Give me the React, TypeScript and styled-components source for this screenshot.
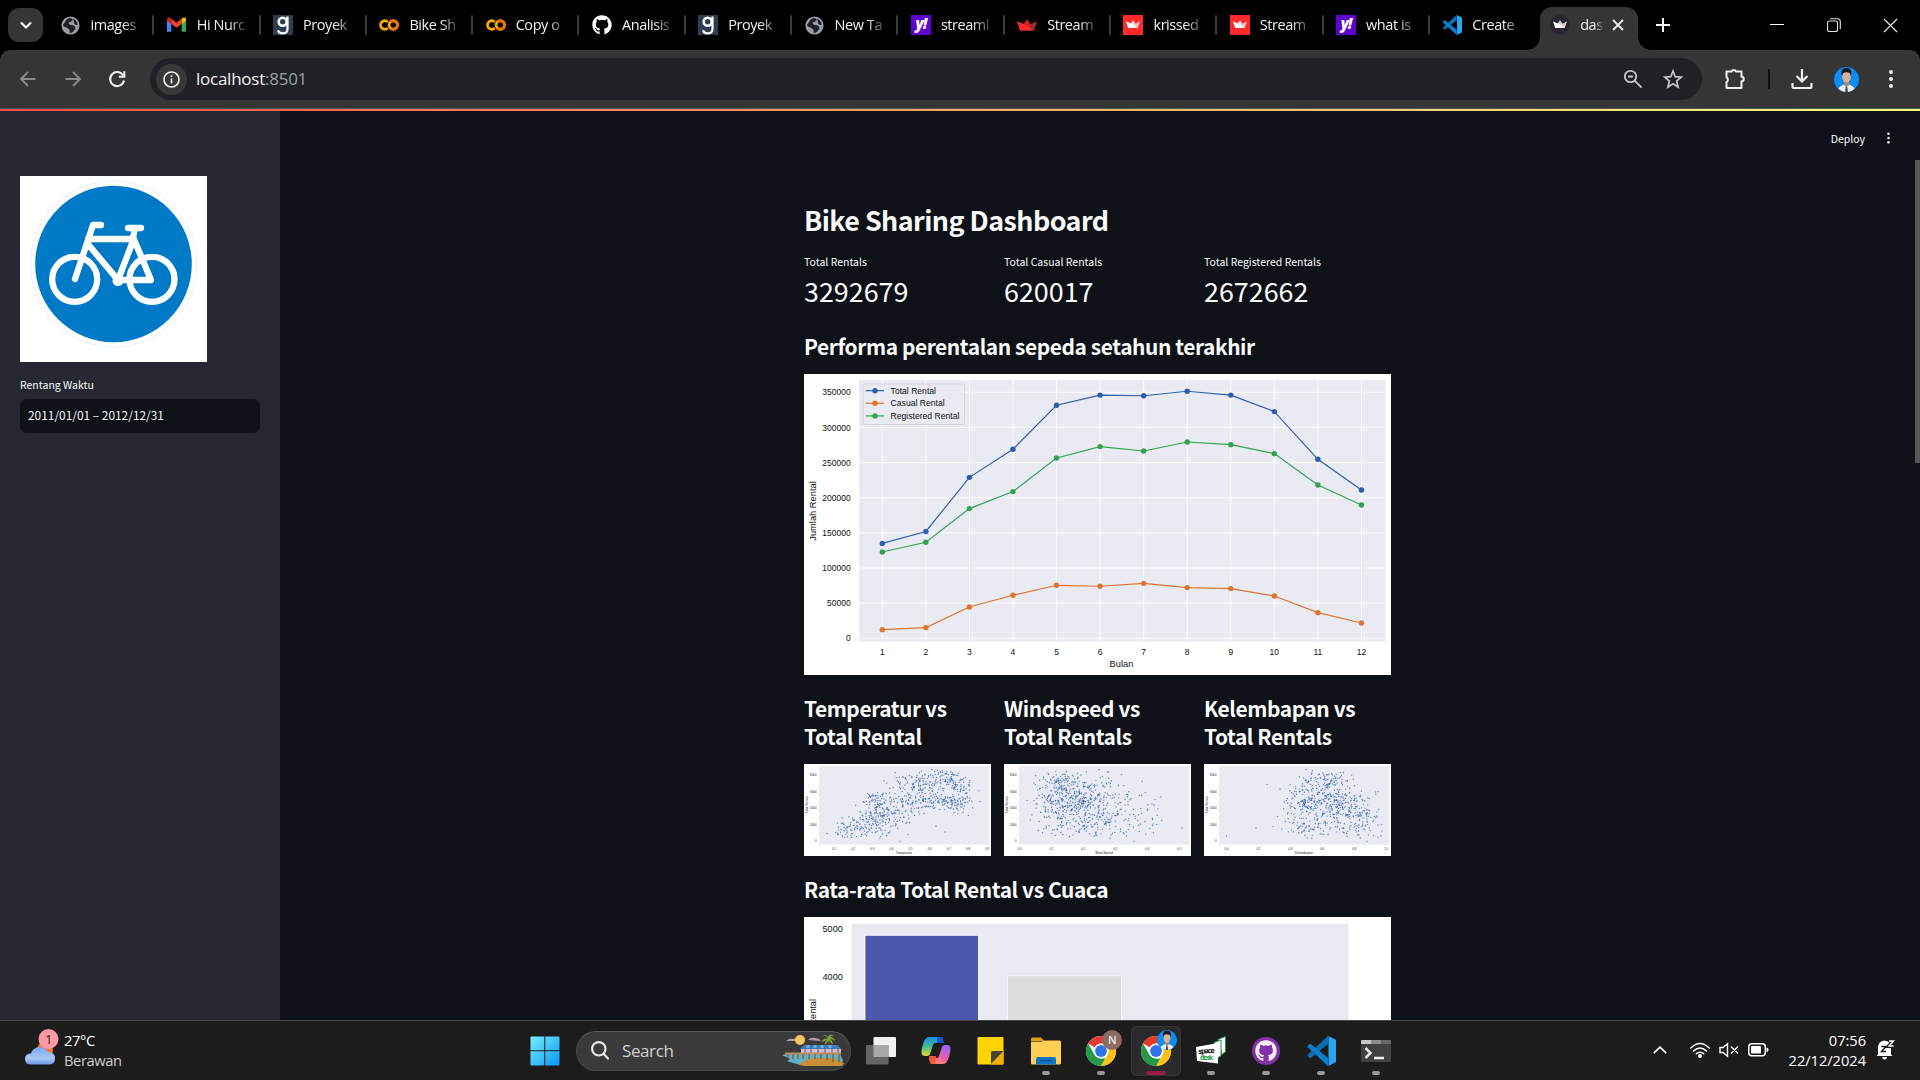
import React from "react";
import styled, { createGlobalStyle } from "styled-components";
import { FaGithub } from "react-icons/fa";

const ui = `"Open Sans", "Noto Sans", sans-serif`;
const source = `"Noto Sans CJK SC", "Noto Sans", sans-serif`;

const GlobalStyle = createGlobalStyle`
  * { box-sizing: border-box; }
  body { margin: 0; background: #0e1117; overflow: hidden; }
  h1, h2, h3, p { margin: 0; }
  svg { display: block; flex: none; overflow: visible; }
`;

const Screen = styled.div`
  width: 1920px;
  height: 1080px;
  display: flex;
  flex-direction: column;
  overflow: hidden;
  background: #000;
  font-family: ${ui};
`;

/* ---------- browser tabs ---------- */

const TabStrip = styled.div`
  height: 50px;
  flex: none;
  display: flex;
  align-items: flex-start;
  padding-left: 8px;
  color: #f0f0f0;
`;

const TabSearch = styled.div`
  width: 35px;
  height: 34px;
  margin: 8px 5px 0 0;
  border-radius: 11px;
  background: #353535;
  display: grid;
  place-items: center;
`;

const Tab = styled.div`
  width: 106.3px;
  height: 50px;
  flex: none;
  display: flex;
  align-items: center;
  padding-left: 12.5px;
`;

const Favicon = styled.div`
  width: 20px;
  height: 20px;
  flex: none;
  display: grid;
  place-items: center;
`;

const TabTitle = styled.span<{ $width: number }>`
  width: ${(p) => p.$width}px;
  margin-left: 10px;
  white-space: nowrap;
  font-size: 14.5px;
  line-height: 22px;
  letter-spacing: -0.45px;
  mask-image: linear-gradient(90deg, #000 62%, rgba(0, 0, 0, 0.15) 100%);
`;

const TabDivider = styled.i`
  width: 2px;
  height: 20px;
  margin-left: auto;
  border-radius: 1px;
  background: #3b3b3b;
`;

const ActiveTab = styled.div`
  width: 98px;
  height: 43px;
  margin: 7px 0 0 4px;
  flex: none;
  display: flex;
  align-items: center;
  padding: 0 14px 7px 10px;
  border-radius: 12px 12px 0 0;
  background: #353535;
  position: relative;
  &::before,
  &::after {
    content: "";
    position: absolute;
    bottom: 0;
    width: 13px;
    height: 13px;
  }
  &::before {
    right: 100%;
    background: radial-gradient(circle at 0 0, transparent 12.5px, #353535 13px);
  }
  &::after {
    left: 100%;
    background: radial-gradient(circle at 100% 0, transparent 12.5px, #353535 13px);
  }
`;

const CloseTab = styled.div`
  margin-left: auto;
`;

const NewTab = styled.div`
  width: 50px;
  height: 50px;
  display: grid;
  place-items: center;
`;

const WindowControls = styled.div`
  margin-left: auto;
  padding-right: 1px;
  display: flex;
  div {
    width: 57px;
    height: 50px;
    display: grid;
    place-items: center;
  }
`;

/* ---------- browser toolbar ---------- */

const Toolbar = styled.div`
  height: 58px;
  flex: none;
  display: flex;
  align-items: center;
  padding: 0 17px 0 17px;
  border-radius: 10px 10px 0 0;
  background: #353535;
`;

const NavButtons = styled.div`
  display: flex;
  width: 133px;
  gap: 22.7px;
`;

const Omnibox = styled.div`
  width: 1552px;
  height: 42px;
  border-radius: 21px;
  background: #202124;
  display: flex;
  align-items: center;
  padding: 0 17px 0 6px;
`;

const SiteInfo = styled.div`
  width: 31px;
  height: 31px;
  border-radius: 50%;
  background: #383838;
  display: grid;
  place-items: center;
`;

const Url = styled.span`
  flex: 1;
  margin-left: 9px;
  color: #f2f2f2;
  font-size: 17px;
  letter-spacing: -0.25px;
  line-height: 24px;
  span {
    color: #9aa0a6;
  }
`;

const OmniIcons = styled.div`
  display: flex;
  gap: 16px;
`;

const ToolbarIcons = styled.div`
  flex: 1;
  display: flex;
  align-items: center;
  gap: 21px;
  padding-left: 21px;
`;

const ToolbarDivider = styled.i`
  width: 2px;
  height: 20px;
  background: #111;
`;

/* ---------- streamlit page ---------- */

const Decoration = styled.div`
  height: 3px;
  flex: none;
  border-top: 1px solid #45595a;
  background: linear-gradient(90deg, #ff4b4b, #fffd80);
`;

const Page = styled.div`
  height: 909px;
  flex: none;
  display: flex;
  background: #0e1117;
  color: #fafafa;
  font-family: ${source};
  overflow: hidden;
`;

const Sidebar = styled.aside`
  width: 280px;
  flex: none;
  padding: 65px 20px 0;
  background: #262730;
`;

const FieldLabel = styled.div`
  margin-top: 13px;
  font-size: 10.5px;
  line-height: 20px;
`;

const DateInput = styled.div`
  height: 34px;
  margin-top: 4px;
  padding-left: 8px;
  border-radius: 7px;
  background: #0e1117;
  font-size: 11.9px;
  line-height: 31px;
`;

const Main = styled.main`
  flex: 1;
  min-width: 0;
  display: flex;
  flex-direction: column;
  align-items: center;
`;

const AppHeader = styled.header`
  width: 100%;
  height: 49px;
  flex: none;
  display: flex;
  justify-content: flex-end;
  align-items: center;
  gap: 21px;
  padding: 5px 29px 0 0;
  font-size: 10.5px;
`;

const Body = styled.div`
  width: 100%;
  flex: 1;
  min-height: 0;
  display: flex;
`;

const Scroll = styled.div`
  width: 5px;
  flex: none;
  i {
    display: block;
    height: 303px;
    background: #55575b;
  }
`;

const Content = styled.div`
  width: 587px;
  flex: none;
  margin: 42px auto 0 524px;
`;

const Title = styled.h1`
  font-size: 26.9px;
  line-height: 36px;
  font-weight: 600;
  letter-spacing: -0.56px;
  white-space: nowrap;
`;

const Columns = styled.div<{ $top: number }>`
  display: grid;
  grid-template-columns: repeat(3, 187px);
  gap: 13px;
  margin-top: ${(p) => p.$top}px;
`;

const MetricLabel = styled.div`
  font-size: 10.5px;
  line-height: 20px;
  white-space: nowrap;
`;

const MetricValue = styled.div`
  font-size: 26.9px;
  line-height: 38px;
`;

const Heading = styled.h3<{ $top: number }>`
  margin: ${(p) => p.$top}px 0 14px;
  font-size: 20.9px;
  line-height: 28px;
  font-weight: 600;
  letter-spacing: -0.41px;
`;

const Figure = styled.div<{ $height: number }>`
  height: ${(p) => p.$height}px;
  background: #fff;
  svg {
    font-family: "Liberation Sans", Arial, sans-serif;
  }
`;

/* ---------- taskbar ---------- */

const Taskbar = styled.footer`
  height: 60px;
  flex: none;
  display: grid;
  grid-template-columns: 519.5px 1fr auto;
  border-top: 1px solid #474747;
  background: #1c1c1c;
  color: #fff;
  font-size: 14.7px;
  letter-spacing: -0.4px;
  line-height: 20px;
`;

const Weather = styled.div`
  display: flex;
  align-items: center;
  gap: 8px;
  padding: 0 0 2px 24px;
  div {
    color: #cfcfcf;
  }
  div b {
    display: block;
    font-weight: 400;
    color: #fff;
  }
`;

const Apps = styled.div`
  display: flex;
  align-items: center;
  gap: 5px;
`;

const AppButton = styled.div<{ $active?: boolean }>`
  width: 50px;
  height: 50px;
  flex: none;
  display: flex;
  flex-direction: column;
  align-items: center;
  padding-top: 10px;
  border-radius: 6px;
  box-shadow: ${(p) => (p.$active ? "inset 0 0 0 1px #353535" : "none")};
  background: ${(p) => (p.$active ? "#2b2b2b" : "transparent")};
`;

const Running = styled.i<{ $active?: boolean }>`
  width: ${(p) => (p.$active ? 20 : 8)}px;
  height: 4px;
  margin-top: 5px;
  border-radius: 2px;
  background: ${(p) => (p.$active ? "#991b43" : "#989898")};
`;

const SearchBox = styled.div`
  width: 275px;
  height: 40px;
  margin: 0 0 0 1.5px;
  flex: none;
  display: flex;
  align-items: center;
  padding: 0 6px 0 14px;
  border: 1px solid #4a4a4a;
  border-top-color: #5a5a5a;
  border-radius: 20px;
  background: #3a3a3a;
  color: #d0d0d0;
  font-size: 17px;
  letter-spacing: -0.4px;
  span {
    flex: 1;
    margin-left: 13px;
  }
`;

const Tray = styled.div`
  display: flex;
  align-items: center;
  padding: 0 25px 2px 0;
`;

const TrayIcons = styled.div`
  display: flex;
  align-items: center;
  gap: 9px;
  margin-right: 20px;
`;

const Clock = styled.div`
  margin-right: 10px;
  text-align: right;
  letter-spacing: -0.05px;
`;

/* ---------- icons ---------- */

const Globe = () => (
  <svg width="19" height="19" viewBox="0 0 20 20">
    <circle cx="10" cy="10" r="9.5" fill="#9aa0a6" />
    <path d="M4 6.5C6 3 9 1.500 11 2.500c2.500 1 1 3-1 3.500-2 .5-2.500 2-1 3 2 1 5 .5 6 2.500 1 2-2 5-4.500 6.500-2 .5-1-2.500-2-4C7 12 3 12 2 9.500zM13 3c3 1 4.500 4 4.500 6.500-1.500 0-4-1-4-3z" fill="#202124" />
  </svg>
);

const Gmail = () => (
  <svg width="19" height="16" viewBox="0 0 20 16">
    <path d="M0 2v13h4.500V5z" fill="#4285f4" />
    <path d="M15.500 5v10H20V2z" fill="#34a853" />
    <path d="M15.500 1.200V7L20 3.500V2c0-2-2.500-2.500-4.500-.8" fill="#fbbc04" />
    <path d="M4.500 1.200 10 5.500l5.500-4.300V7L10 11 4.500 7z" fill="#ea4335" />
    <path d="M4.500 1.200C2.500-.5 0 0 0 2v1.500L4.500 7z" fill="#c5221f" />
  </svg>
);

const GLetter = () => (
  <svg width="20" height="20" viewBox="0 0 20 20">
    <rect width="20" height="20" fill="#2d3e50" />
    <circle cx="9.700" cy="6.800" r="4" fill="none" stroke="#fff" strokeWidth="2.600" />
    <path d="M14.500 1.500v12.500c0 3-2 4.300-4.700 4.300-2.600 0-4.300-1-4.700-3" fill="none" stroke="#fff" strokeWidth="2.200" />
  </svg>
);

const Colab = () => (
  <svg width="20" height="12" viewBox="0 0 20 12">
    <circle cx="14.300" cy="6" r="4.200" fill="none" stroke="#f9ab00" strokeWidth="2.900" />
    <path d="M11.300 3a4.200 4.200 0 1 1 0 6" fill="none" stroke="#e8710a" strokeWidth="2.900" />
    <path d="M8.700 3A4.200 4.200 0 1 0 8.700 9" fill="none" stroke="#f9ab00" strokeWidth="2.900" />
  </svg>
);

const YahooBox = styled.b`
  width: 20px;
  height: 20px;
  background: #5f01d1;
  color: #fff;
  text-align: center;
  font: italic 800 15px/17px ${ui};
  letter-spacing: -1px;
`;

const Crown = ({ kind }: { kind: "red" | "box" | "dark" }) => {
  const main = kind === "red" ? "#ff2b2b" : "#fff";
  return (
    <svg width="20" height="20" viewBox="0 0 20 20">
      {kind === "box" && <rect width="20" height="20" fill="#ff2b2b" />}
      {kind === "dark" && <circle cx="10" cy="10" r="10" fill="#262730" />}
      <g transform={kind === "red" ? "translate(-2.500 -2) scale(1.250)" : "translate(1.500 1) scale(.85)"}>
        <path d="M2 6.500 7 9l3-4 3 4 5-2.500-2.500 7.500h-11z" fill={main} opacity=".8" />
        <path d="M2 6.500l10 4.500 3.500 3h-11z" fill={main} />
        <path d="M18 6.500 12 11l2 3h1.500z" fill={kind === "red" ? "#7d353b" : "#f1b9bc"} opacity=".7" />
      </g>
    </svg>
  );
};

const VsCode = ({ size }: { size: number }) => (
  <svg width={size} height={size} viewBox="0 0 30 30">
    <path d="M22 0 2 18.500c-.7.600-.7 1.500 0 2l1.500 1.300c.5.4 1 .4 1.600 0L22 8z" fill="#0a6fb5" />
    <path d="M22 30 2 11.500c-.7-.6-.7-1.500 0-2l1.500-1.300c.5-.4 1-.4 1.600 0L22 22z" fill="#0c80cc" />
    <path d="M21 .5c.4-.5.800-.6 1.500-.3l6 2.800c1 .5 1.500 1 1.500 2v20c0 1-.5 1.500-1.500 2l-6 2.800c-.7.3-1.200.2-1.500-.3 1 .5 1.500 0 1.500-1V1.500c0-1-.5-1.500-1.500-1z" fill="#2aa5ef" />
  </svg>
);

const Arrow = ({ flip }: { flip?: boolean }) => (
  <svg width="22" height="22" viewBox="0 0 22 22" fill="none" stroke="#8b8b8b" strokeWidth="1.800">
    <path transform={flip ? "rotate(180 11 11)" : undefined} d="M18.500 11H4M11 4l-7 7 7 7" />
  </svg>
);

const Reload = () => (
  <svg width="22" height="22" viewBox="0 0 22 22" fill="none" stroke="#eee" strokeWidth="2.100">
    <path d="M17.200 7.500A7 7 0 1 0 18 12.500" />
    <path d="M18.300 3.300v5.400h-5.500" />
  </svg>
);

const Dots = ({ size, color = "#eee" }: { size: number; color?: string }) => (
  <svg width="5" height={size} viewBox={`0 0 5 ${size}`} fill={color}>
    {[0.14, 0.5, 0.86].map((f) => (
      <circle key={f} cx="2.500" cy={size * f} r={size / 9.5} />
    ))}
  </svg>
);

const Person = ({ size }: { size: number }) => (
  <svg width={size} height={size} viewBox="0 0 26 26">
    <clipPath id={`person${size}`}><circle cx="13" cy="13" r="13" /></clipPath>
    <g clipPath={`url(#person${size})`}>
      <rect width="26" height="26" fill="#0c8cf5" />
      <path d="M4 26c0-5 3.500-7 9-8.500 5.500 1.500 9 3.500 9 8.500z" fill="#eceef3" />
      <path d="M10.500 14h5v5L13 21l-2.500-2z" fill="#b9835e" />
      <ellipse cx="13" cy="10" rx="4.500" ry="6.500" fill="#dfae8b" />
      <path d="M8.300 9.500C7 3.500 9 1 13 1s6 2.500 4.700 8.500C17 6.500 16 5.500 13 5.500s-4 1-4.700 4z" fill="#1d1716" />
      <path d="m12.300 20.500 1.500 0 .7 5.500h-3z" fill="#34485f" />
    </g>
  </svg>
);

const ChromeLogo = () => (
  <g>
    <circle cx="15" cy="15" r="15" fill="#fff" />
    <path d="M15 15 2 7.500A15 15 0 0 1 28 7.500H15z" fill="#e33b2e" />
    <path d="M15 7.500H28A15 15 0 0 1 15 30l6.500-11.300z" fill="#fbc116" />
    <path d="M2 7.500 8.500 18.700 15 22.500h4.300L15 30A15 15 0 0 1 2 7.500z" fill="#279847" />
    <circle cx="15" cy="15" r="7.500" fill="#fff" />
    <circle cx="15" cy="15" r="5.900" fill="#2c74e8" />
  </g>
);

/* ---------- sidebar picture ---------- */

const BikeSign = () => (
  <svg width="187" height="186" viewBox="0 0 187 186">
    <rect width="187" height="186" fill="#fff" />
    <circle cx="93.500" cy="88" r="83" fill="#fff" stroke="#e3f1f8" strokeWidth="1" />
    <circle cx="93.500" cy="88" r="78.300" fill="#0079c7" />
    <g fill="none" stroke="#fff" strokeWidth="6.300" strokeLinecap="round" strokeLinejoin="round">
      <circle cx="54.700" cy="103.300" r="22.500" />
      <circle cx="132" cy="103.300" r="22.500" />
      <path d="M55 103 73 49h8M68 63h45M67 67l31 37h33L113 61M113 65 98 104M113 62l2-10M108 52h13" />
    </g>
    <circle cx="98" cy="104.500" r="5.500" fill="#fff" />
  </svg>
);

/* ---------- line chart ---------- */

const series = [
  { name: "Total Rental", color: "#2c5eb0", data: [135, 152, 229, 269, 331.5, 346, 345, 351.5, 346, 322.5, 254.7, 211] },
  { name: "Casual Rental", color: "#dd7630", data: [12.3, 15.2, 44.6, 61.2, 75.4, 74, 78.2, 72.1, 70.7, 60.2, 36.5, 21.8] },
  { name: "Registered Rental", color: "#33a352", data: [122.8, 136.6, 184.5, 208.7, 256.6, 272.7, 266.5, 279.3, 275.5, 262.7, 218.2, 189.7] },
];

const monthX = (i: number) => 78.3 + i * 43.56;
const rentalY = (v: number) => 264.3 - v * 0.7029;

const LineChart = () => (
  <svg width="587" height="301" viewBox="0 0 587 301" fontSize="8.500" fill="#111">
    <rect x="55" y="6" width="526.500" height="261.500" fill="#eaeaf2" />
    {[0, 50, 100, 150, 200, 250, 300, 350].map((v) => (
      <g key={v}>
        <path d={`M55 ${rentalY(v)}h526.500`} stroke="#fff" strokeWidth=".9" />
        <text x="46.700" y={rentalY(v) + 3.1} textAnchor="end">{v * 1000}</text>
      </g>
    ))}
    {series[0].data.map((_, i) => (
      <g key={i}>
        <path d={`M${monthX(i)} 6v261.500`} stroke="#fff" strokeWidth=".9" />
        <text x={monthX(i)} y="281.400" textAnchor="middle">{i + 1}</text>
      </g>
    ))}
    {series.map((s) => (
      <g key={s.name}>
        <polyline points={s.data.map((v, i) => `${monthX(i)},${rentalY(v)}`).join(" ")} fill="none" stroke={s.color} strokeWidth="1.150" />
        {s.data.map((v, i) => (
          <circle key={i} cx={monthX(i)} cy={rentalY(v)} r="2.700" fill={s.color} />
        ))}
      </g>
    ))}
    <rect x="59" y="10" width="101.500" height="40.500" rx="1.500" fill="#eaeaf2" fillOpacity=".85" stroke="#cfcfd6" strokeWidth=".8" />
    {series.map((s, i) => (
      <g key={s.name} transform={`translate(0 ${16.7 + i * 12.6})`}>
        <path d="M61.700 0H80" stroke={s.color} strokeWidth="1.200" />
        <circle cx="71" r="2.700" fill={s.color} />
        <text x="86.600" y="3" fontSize="8.600">{s.name}</text>
      </g>
    ))}
    <text x="317.500" y="293.300" textAnchor="middle" fontSize="9.300">Bulan</text>
    <text transform="translate(12.400 137) rotate(-90)" textAnchor="middle" fontSize="9.300">Jumlah Rental</text>
  </svg>
);

/* ---------- scatter charts ---------- */

type Cluster = [cx: number, cy: number, sx: number, sy: number, count: number, slope?: number];

function scatterPoints(clusters: Cluster[], seed: number) {
  let s = seed;
  const rnd = () => {
    s = (s * 16807) % 2147483647;
    return s / 2147483647;
  };
  const gauss = () => {
    let g = 3;
    while (Math.abs(g) > 2) g = Math.sqrt(-2 * Math.log(rnd())) * Math.cos(6.28318 * rnd());
    return g;
  };
  const out: [number, number][] = [];
  clusters.forEach(([cx, cy, sx, sy, count, slope = 0]) => {
    for (let i = 0; i < count; i++) {
      const gx = gauss();
      const gy = gauss();
      const x = cx + gx * sx;
      const y = cy + gy * sy + slope * gx * sx;
      if (y > 6 && y < 75 && x > 20 && x < 181) out.push([x, y]);
    }
  });
  return out;
}

const scatters = [
  {
    title: "Temperatur vs Total Rental",
    axis: "Temperatur",
    ticks: [0.1, 0.2, 0.3, 0.4, 0.5, 0.6, 0.7, 0.8, 0.9],
    first: 30, step: 19.15, seed: 77,
    clusters: [[60, 61, 17, 6, 125, -0.15], [72, 45, 11, 7, 90, -0.2], [70, 32, 6, 2, 20], [102, 42, 16, 9, 115, -0.25], [143, 38, 13, 4, 105], [122, 16, 16, 6, 100, -0.1], [151, 19, 8, 6, 55, 0.3], [118, 28, 20, 9, 75, -0.1], [158, 32, 9, 10, 32], [80, 67, 15, 4, 22]] as Cluster[],
    extra: [[96, 77.5], [141, 68], [23, 69.5], [176, 37.5], [132, 62], [128, 5.5]],
  },
  {
    title: "Windspeed vs Total Rentals",
    axis: "Wind Speed",
    ticks: ["0.0", 0.1, 0.2, 0.3, 0.4, 0.5],
    first: 15.5, step: 31.9, seed: 1234,
    clusters: [[68, 38, 19, 6, 165], [56, 17, 14, 5, 75], [67, 26, 18, 6, 70], [85, 60, 18, 8, 100], [97, 28, 23, 12, 105], [125, 50, 18, 13, 65], [48, 48, 12, 12, 45], [78, 48, 18, 9, 60]] as Cluster[],
    extra: [[130, 77.5], [157, 33], [178, 64], [148, 40], [23, 36.5], [95, 5.5], [149, 60]],
  },
  {
    title: "Kelembapan vs Total Rentals",
    axis: "Kelembapan",
    ticks: ["0.0", 0.2, 0.4, 0.6, 0.8, "1.0"],
    first: 22.5, step: 31.9, seed: 909,
    clusters: [[130, 40, 18, 7, 130], [119, 16, 15, 5, 85], [103, 36, 11, 8, 65], [103, 62, 11, 7, 65], [140, 46, 19, 13, 130], [153, 59, 13, 8, 65], [122, 27, 18, 8, 60], [92, 42, 13, 12, 30]] as Cluster[],
    extra: [[22.5, 72], [52, 64], [63, 20.5], [163, 77.5], [102, 5.5], [178, 67]],
  },
];

const ScatterChart = ({ data }: { data: (typeof scatters)[number] }) => (
  <svg width="187" height="92" viewBox="0 0 187 92" fontSize="2.900" fill="#222">
    <rect x="15" y="2" width="170" height="78.700" fill="#eaeaf2" />
    {[8000, 6000, 4000, 2000, 0].map((v, i) => (
      <text key={v} x="12.500" y={12.3 + i * 16.5} textAnchor="end">{v}</text>
    ))}
    {data.ticks.map((t, i) => (
      <text key={i} x={data.first + i * data.step} y="85.600" textAnchor="middle">{t}</text>
    ))}
    <g fill="#245cb0" fillOpacity=".75">
      {[...scatterPoints(data.clusters, data.seed), ...data.extra].map(([x, y], i) => (
        <circle key={i} cx={x} cy={y} r=".68" />
      ))}
    </g>
    <text x="100" y="89.800" textAnchor="middle" fontSize="3.200">{data.axis}</text>
    <text transform="translate(4 41) rotate(-90)" textAnchor="middle" fontSize="3.200">Total Rental</text>
  </svg>
);

const BarChart = () => (
  <svg width="587" height="103" viewBox="0 0 587 103" fontSize="9.100" fill="#111">
    <rect x="47.500" y="6.500" width="497" height="100" fill="#eaeaf2" />
    <text x="38.800" y="14.800" textAnchor="end">5000</text>
    <text x="38.800" y="63.200" textAnchor="end">4000</text>
    <rect x="61" y="18.300" width="113.500" height="90" fill="#4c57ae" stroke="#f6f6fa" strokeWidth=".9" />
    <rect x="203.500" y="58.700" width="114" height="50" fill="#dcdcdc" stroke="#f6f6fa" strokeWidth="1" />
    <text transform="translate(12.400 82) rotate(-90)" textAnchor="end" fontSize="9.200">Total Rental</text>
  </svg>
);

/* ---------- taskbar pictures ---------- */

const StartLogo = () => (
  <svg width="30" height="30" viewBox="0 0 30 30">
    <linearGradient id="start" x1="0" y1="0" x2="1" y2="1" gradientUnits="objectBoundingBox">
      <stop offset="0" stopColor="#75efff" />
      <stop offset="1" stopColor="#0c97f5" />
    </linearGradient>
    <path d="M1.500.5H14.300V14.300H.5V1.500q0-1 1-1M15.300.5H28.500q1 0 1 1V14.300H15.300zM.5 15.300H14.300V29.500H1.500q-1 0-1-1zM15.300 15.300H29.500V28.500q0 1-1 1H15.300z" fill="url(#start)" />
  </svg>
);

const BeachScene = () => (
  <svg width="62" height="33" viewBox="0 0 62 33">
    <path d="M4 7q3-3 7-2 5-2 8 2zM26 6q3-3 7-2 4 0 6 3z" fill="#b99aa6" />
    <circle cx="18" cy="6" r="5" fill="#ffc466" />
    <path d="M0 21 8 19h50l3 8-3 4H18L5 27l3-2z" fill="#62b0c4" />
    <path d="M17 31q5-7 26-7 10 0 19 5l-2 3H22z" fill="#c98d35" />
    <path d="M47 18q1-7-1-14 2 7-.5 14z" fill="#78552b" stroke="#78552b" strokeWidth="1.200" />
    <path d="M46 5q-5-2-6 3l5-2q-3 3-2 5l4-5q1 3 4 4 0-3-3-5 3 0 5 2-1-4-5-4 2-2 4-1-4-3-6 1-3-3-6-1 4-1 6 3z" fill="#7da63c" />
    <path d="M19 15h40v5H19z" fill="#d5bcca" />
    <path d="m18 15 4-4h34l3 4z" fill="#3d79b5" />
    <path d="M23 15v5M29 15v5M36 15v5M43 15v5M50 15v5M56 15v5" stroke="#8a7390" strokeWidth="1.500" />
    <path d="M26 11v3M33 11v3M40 11v3M48 11v3" stroke="#6eb1df" strokeWidth="3" />
    <path d="M3 19.500h56" stroke="#bc8d5e" strokeWidth="1.800" />
    <path d="M6 20v4M11 20v5M16 20v5M21 20v5M27 20v5M33 20v5M39 20v5M45 20v6M51 20v8M57 20v8" stroke="#8a6040" strokeWidth="1.400" />
  </svg>
);

const TaskView = () => (
  <svg width="30" height="30" viewBox="0 0 30 30">
    <rect x="7.500" y="1" width="22.500" height="20" rx="1" fill="#f1f1f1" />
    <rect x="0" y="9" width="22.500" height="19.500" rx="1" fill="#6d6d6d" opacity=".9" />
    <path d="M7.500 9h15v12h-15z" fill="#a7a7a7" />
  </svg>
);

const Copilot = () => (
  <svg width="30" height="30" viewBox="0 0 30 30">
    <linearGradient id="cpA" x1="0" y1="0" x2="0" y2="1">
      <stop offset="0" stopColor="#168de2" /><stop offset=".5" stopColor="#42bd92" /><stop offset="1" stopColor="#e6d52d" />
    </linearGradient>
    <linearGradient id="cpB" x1=".6" y1="0" x2="0" y2="1">
      <stop offset="0" stopColor="#a763ee" /><stop offset=".5" stopColor="#ee5ea6" /><stop offset="1" stopColor="#ff9d49" />
    </linearGradient>
    <path d="M8 1h10c3 0 3 2 4 6h-7c-3 0-3 2-4 5l-2 6c-1 2-2 2-5 2-4 0-4-4-3-8C2.500 6 4 1 8 1z" fill="url(#cpA)" />
    <path d="M16 1h3c3 0 3 2 4 6h-7z" fill="#1558d0" />
    <path d="M22 28H12c-3 0-3-2-4-6h7c3 0 3-2 4-5l2-6c1-2 2-2 5-2 4 0 4 4 3 8-1.500 6-3 11-7 11z" fill="url(#cpB)" />
    <path d="M8 20h7l-1 8h-2c-3 0-3-3-4-8z" fill="#f45a37" />
  </svg>
);

const StickyNotes = () => (
  <svg width="30" height="30" viewBox="0 0 30 30">
    <path d="M2.500 1h24q1 0 1 1v25.500q0 1-1 1h-24q-1 0-1-1V2q0-1 1-1" fill="#ffd400" />
    <path d="M15 28.500 27.500 15v12.500q0 1-1 1z" fill="#f2b100" />
    <path d="M15 28V16.500q0-1.500 1.500-1.500h11z" fill="#454239" />
  </svg>
);

const Folder = () => (
  <svg width="30" height="30" viewBox="0 0 30 30">
    <path d="M0 3q0-1.500 1.500-1.500H10l3.500 4H0z" fill="#e0a008" />
    <path d="M0 6h10l3-1.500h15.500q1.500 0 1.500 1.500v21q0 1.500-1.500 1.500h-27Q0 28.500 0 27z" fill="#ffce52" />
    <path d="M5 28.500V23q0-2 2-2h16q2 0 2 2v5.500z" fill="#0f76c4" />
    <path d="M9 24.500h12" stroke="#08518e" strokeWidth="1.500" />
  </svg>
);

const Chrome = ({ children }: { children: React.ReactNode }) => (
  <svg width="30" height="30" viewBox="0 0 30 30">
    <ChromeLogo />
    <g transform="translate(16 -6)">{children}</g>
  </svg>
);

const SpaceDesk = () => (
  <svg width="30" height="30" viewBox="0 0 30 30" fontFamily="Open Sans, sans-serif" fontWeight="700" fontSize="7.500">
    <path d="M22 3.500 29.500.5v15l-3.500 3z" fill="#fff" stroke="#26924a" strokeWidth="1" />
    <path d="M18 6.500l7-2.500v16l-4 2z" fill="#fff" stroke="#26924a" strokeWidth="1" />
    <path d="M0 11 22 7v20.500L1 25z" fill="#fff" />
    <text x="2.500" y="17.500" fill="#222" transform="rotate(-4 10 17)" textLength="16">space</text>
    <text x="4" y="24" fill="#28a14d" textLength="13">desk</text>
  </svg>
);

const GithubDesktop = styled.div`
  width: 28px;
  height: 28px;
  margin: 1px 0;
  border-radius: 50%;
  background: #8431a8;
  display: grid;
  place-items: center;
  color: #f3effa;
`;

const Terminal = () => (
  <svg width="30" height="30" viewBox="0 0 30 30">
    <rect y="4" width="30" height="22" rx="1.500" fill="#414141" />
    <path d="M0 8V5q0-1 1-1h18v4z" fill="#c8c8c8" />
    <path d="M10 4h10v4H10z" fill="#8f8f8f" />
    <path d="M20 4h9q1 0 1 1v3H20z" fill="#686868" />
    <path d="m4.500 12 5 5-5 5" fill="none" stroke="#e4e4e4" strokeWidth="2.500" />
    <path d="M13 22h10" stroke="#f2f2f2" strokeWidth="2.500" />
  </svg>
);

const WeatherIcon = () => (
  <svg width="32" height="34" viewBox="0 0 32 34">
    <linearGradient id="cloud" x1="0" y1="0" x2="0" y2="1">
      <stop offset="0" stopColor="#7fa4ef" /><stop offset=".65" stopColor="#a9c8f8" /><stop offset="1" stopColor="#6d94e4" />
    </linearGradient>
    <circle cx="21" cy="17" r="8" fill="#f47b20" />
    <path d="M7 31.500q-6 0-6-5.500t6-5.500q2-6.500 9-6.500 6 0 8 5 7 0 7 6.500t-7 6z" fill="url(#cloud)" />
    <circle cx="24.500" cy="6" r="10" fill="#ff99a4" />
    <text x="24.500" y="10.500" textAnchor="middle" fontSize="13" fill="#222">1</text>
  </svg>
);

/* ---------- composition ---------- */

const tabs: [string, React.ReactNode][] = [
  ["images", <Globe />],
  ["Hi Nurc", <Gmail />],
  ["Proyek", <GLetter />],
  ["Bike Sh", <Colab />],
  ["Copy o", <Colab />],
  ["Analisis", <FaGithub size={20} color="#fff" />],
  ["Proyek", <GLetter />],
  ["New Ta", <Globe />],
  ["streaml", <YahooBox>y!</YahooBox>],
  ["Stream", <Crown kind="red" />],
  ["krissed", <Crown kind="box" />],
  ["Stream", <Crown kind="box" />],
  ["what is", <YahooBox>y!</YahooBox>],
  ["Create", <VsCode size={20} />],
];

export default function App() {
  return (
    <Screen>
      <GlobalStyle />
      <TabStrip>
        <TabSearch>
          <svg width="12" height="8" viewBox="0 0 12 8" fill="none" stroke="#fff" strokeWidth="2.100"><path d="m1 1.500 5 5 5-5" /></svg>
        </TabSearch>
        {tabs.map(([name, icon], i) => (
          <Tab key={i}>
            <Favicon>{icon}</Favicon>
            <TabTitle $width={51}>{name}</TabTitle>
            {i < tabs.length - 1 && <TabDivider />}
          </Tab>
        ))}
        <ActiveTab>
          <Favicon><Crown kind="dark" /></Favicon>
          <TabTitle $width={23}>das</TabTitle>
          <CloseTab>
            <svg width="12" height="12" viewBox="0 0 12 12" stroke="#eee" strokeWidth="1.800"><path d="m1 1 10 10M11 1 1 11" /></svg>
          </CloseTab>
        </ActiveTab>
        <NewTab>
          <svg width="14" height="14" viewBox="0 0 14 14" stroke="#fff" strokeWidth="2"><path d="M7 0v14M0 7h14" /></svg>
        </NewTab>
        <WindowControls>
          <div><svg width="14" height="14" viewBox="0 0 14 14" stroke="#fff" strokeWidth="1"><path d="M0 6.500h14" /></svg></div>
          <div>
            <svg width="14" height="14" viewBox="0 0 14 14" stroke="#ddd" fill="none" strokeWidth="1.100">
              <rect x=".5" y="3" width="10" height="10.500" rx="2" /><path d="M3 .8h7.500q2.800 0 2.800 2.800V11" />
            </svg>
          </div>
          <div><svg width="13" height="13" viewBox="0 0 13 13" stroke="#eee" strokeWidth="1.100"><path d="m0 0 13 13M13 0 0 13" /></svg></div>
        </WindowControls>
      </TabStrip>

      <Toolbar>
        <NavButtons><Arrow /><Arrow flip /><Reload /></NavButtons>
        <Omnibox>
          <SiteInfo>
            <svg width="17" height="17" viewBox="0 0 17 17" fill="none" stroke="#eee" strokeWidth="1.700">
              <circle cx="8.500" cy="8.500" r="7.500" /><path d="M8.500 7.500v5M8.500 4.300v1.800" />
            </svg>
          </SiteInfo>
          <Url>localhost<span>:8501</span></Url>
          <OmniIcons>
            <svg width="24" height="24" viewBox="0 0 24 24" fill="none" stroke="#c7c7c7" strokeWidth="1.800">
              <circle cx="9.500" cy="9.500" r="5.700" /><path d="m13.600 13.600 7 7M7 9.500h5" />
            </svg>
            <svg width="24" height="24" viewBox="0 0 24 24" fill="none" stroke="#c7c7c7" strokeWidth="1.700">
              <path d="m12 4 2.200 5.700 6 .4-4.600 3.900 1.500 6-5.100-3.300L6.900 20l1.500-6-4.600-3.900 6-.4z" />
            </svg>
          </OmniIcons>
        </Omnibox>
        <ToolbarIcons>
          <svg width="24" height="24" viewBox="0 0 24 24" fill="none" stroke="#eee" strokeWidth="2" strokeLinejoin="round">
            <path d="M3.500 4.500h5.200a2.200 2.200 0 0 1 4.200 0H18.500v5.300a2.200 2.200 0 0 1 0 4.500V21h-15v-5.800a3 3 0 0 0 0-5z" />
          </svg>
          <ToolbarDivider />
          <svg width="22" height="22" viewBox="0 0 22 22" fill="none" stroke="#eee" strokeWidth="2.200">
            <path d="M11 1v12M5.500 8l5.500 5.500L16.500 8M1.500 15v3.500q0 1.500 1.500 1.500h16q1.500 0 1.500-1.500V15" />
          </svg>
          <Person size={25} />
          <svg width="22" height="20" viewBox="0 0 22 20" fill="#eee"><circle cx="11" cy="3" r="2" /><circle cx="11" cy="10" r="2" /><circle cx="11" cy="17" r="2" /></svg>
        </ToolbarIcons>
      </Toolbar>

      <Decoration />
      <Page>
        <Sidebar>
          <BikeSign />
          <FieldLabel>Rentang Waktu</FieldLabel>
          <DateInput>2011/01/01 – 2012/12/31</DateInput>
        </Sidebar>
        <Main>
          <AppHeader>Deploy<Dots size={12} /></AppHeader>
          <Body>
            <Content>
              <Title>Bike Sharing Dashboard</Title>
              <Columns $top={14}>
                {[["Total Rentals", "3292679"], ["Total Casual Rentals", "620017"], ["Total Registered Rentals", "2672662"]].map(([l, v]) => (
                  <div key={l}>
                    <MetricLabel>{l}</MetricLabel>
                    <MetricValue>{v}</MetricValue>
                  </div>
                ))}
              </Columns>
              <Heading $top={22}>Performa perentalan sepeda setahun terakhir</Heading>
              <Figure $height={301}><LineChart /></Figure>
              <Columns $top={19}>
                {scatters.map((s) => (
                  <div key={s.axis}>
                    <Heading $top={0}>{s.title}</Heading>
                    <Figure $height={92}><ScatterChart data={s} /></Figure>
                  </div>
                ))}
              </Columns>
              <Heading $top={19}>Rata-rata Total Rental vs Cuaca</Heading>
              <Figure $height={103}><BarChart /></Figure>
            </Content>
            <Scroll><i /></Scroll>
          </Body>
        </Main>
      </Page>

      <Taskbar>
        <Weather>
          <WeatherIcon />
          <div><b>27°C</b>Berawan</div>
        </Weather>
        <Apps>
          <AppButton><StartLogo /></AppButton>
          <SearchBox>
            <svg width="18" height="19" viewBox="0 0 18 19" fill="none" stroke="#e5e5e5" strokeWidth="2.200" strokeLinecap="round"><circle cx="7.800" cy="7.800" r="6.700" /><path d="m12.700 13 4.300 4.500" /></svg>
            <span>Search</span>
            <BeachScene />
          </SearchBox>
          <AppButton><TaskView /></AppButton>
          <AppButton><Copilot /></AppButton>
          <AppButton><StickyNotes /></AppButton>
          <AppButton><Folder /><Running /></AppButton>
          <AppButton>
            <Chrome>
              <circle cx="10" cy="10" r="10" fill="#8a6c62" />
              <text x="10" y="14" textAnchor="middle" fontSize="11" fontWeight="600" fill="#eee">N</text>
            </Chrome>
            <Running />
          </AppButton>
          <AppButton $active><Chrome><Person size={20} /></Chrome><Running $active /></AppButton>
          <AppButton><SpaceDesk /><Running /></AppButton>
          <AppButton><GithubDesktop><FaGithub size={22} /></GithubDesktop><Running /></AppButton>
          <AppButton><VsCode size={30} /><Running /></AppButton>
          <AppButton><Terminal /><Running /></AppButton>
        </Apps>
        <Tray>
          <TrayIcons>
            <svg width="14" height="8" viewBox="0 0 14 8" fill="none" stroke="#fff" strokeWidth="1.700"><path d="m.8 7.200 6.200-6 6.200 6" /></svg>
            <svg width="34" height="16" viewBox="-14 0 34 16" fill="none" stroke="#fff" strokeWidth="1.500" strokeLinecap="round">
              <path d="M.8 6q9.200-9 18.400 0M3.500 9q6.500-6 13 0M6.300 11.700q3.700-3 7.400 0" /><circle cx="10" cy="14" r="1.200" fill="#fff" />
            </svg>
            <svg width="20" height="16" viewBox="0 0 20 16" fill="none" stroke="#fff" strokeWidth="1.400"><path d="M1 5.500h3L8.500 1.800v12.400L4 10.500H1zM12 4.500l7 7M19 4.500l-7 7" /></svg>
            <svg width="21" height="14" viewBox="0 0 21 14"><rect x=".8" y=".8" width="16.500" height="12" rx="3" fill="none" stroke="#fff" strokeWidth="1.500" /><rect x="3" y="3" width="10" height="7.600" rx="1" fill="#fff" /><path d="M18.500 4.500q2 0 2 2.300t-2 2.300z" fill="#fff" /></svg>
          </TrayIcons>
          <Clock>07:56<br />22/12/2024</Clock>
          <svg width="19" height="20" viewBox="0 0 19 20">
            <path d="M2 14.500V8q0-7 6.500-7.500Q15 1 15 8v6.500l1.500 1.500H.5zM6 17h5q-.5 2.500-2.500 2.500T6 17" fill="#fff" />
            <path d="M5.500 6.500h4.500l-4.500 5h4.500" fill="none" stroke="#1c1c1c" strokeWidth="1.400" />
            <path d="M13 1h4.500L13 6h4.500" fill="none" stroke="#1c1c1c" strokeWidth="4" />
            <path d="M13 1h4.500L13 6h4.500" fill="none" stroke="#fff" strokeWidth="1.400" />
          </svg>
        </Tray>
      </Taskbar>
    </Screen>
  );
}
